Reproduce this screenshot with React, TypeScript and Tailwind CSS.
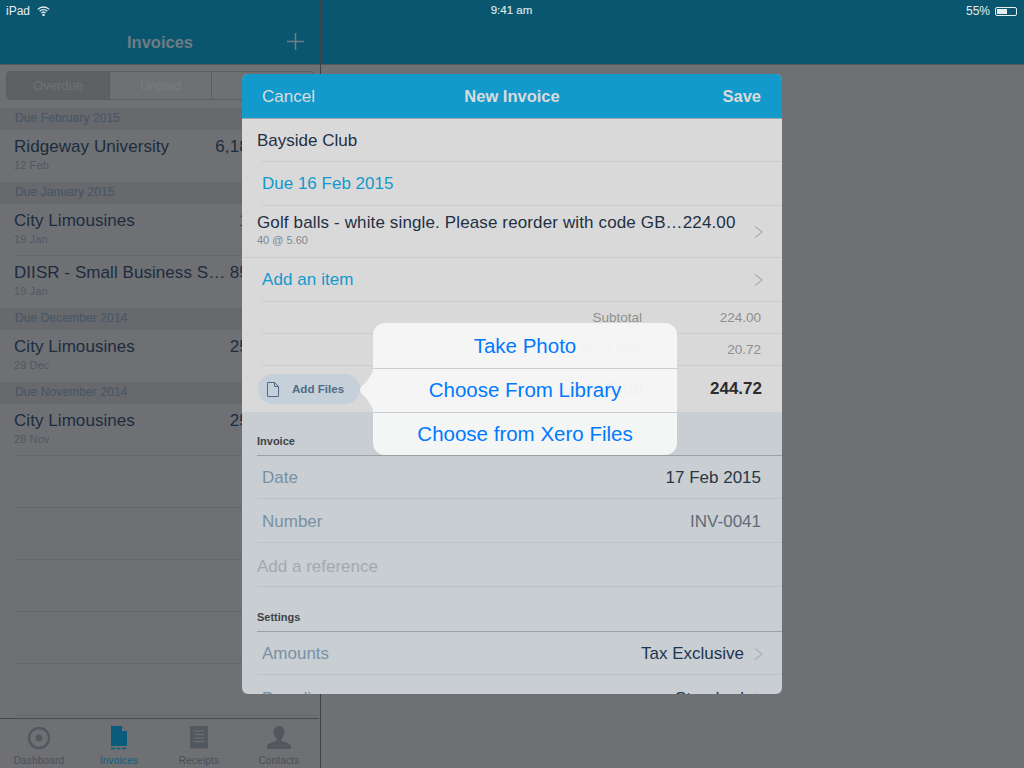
import React from "react";

const Chevron = () => (
  <svg width="9" height="12" viewBox="0 0 9 12" fill="none" className="shrink-0">
    <path d="M1 .5L8 6 1 11.500" stroke="#adb0b3" strokeWidth="1.3" />
  </svg>
);

const Section = ({ t }: { t: string }) => (
  <div className="h-[22px] pl-[15px] bg-[#67696d] text-[12px] leading-[20px] tracking-[0.1px] [-webkit-text-stroke:0.2px_#4a5766] text-[#4a5766]">{t}</div>
);

const ListRow = ({ name, date, amount, line }: { name: string; date: string; amount: string; line?: boolean }) => (
  <div className="relative h-[52px] pl-[14px] pr-[38px] pt-[7px] bg-[#6f7074]">
    <div className="flex justify-between whitespace-nowrap text-[17px] leading-[20px] tracking-[0.06px] text-[#1c2c3d]">
      <span className="w-[212px] truncate">{name}</span>
      <span>{amount}</span>
    </div>
    <div className="mt-[2px] text-[11px] leading-[13px] tracking-[0.1px] text-[#4f5862]">{date}</div>
    {line && <div className="absolute bottom-0 left-[15px] right-0 h-px bg-[#65676b]" />}
  </div>
);

const EmptyRow = () => <div className="h-[52px] ml-[15px] border-b border-[#65676b]" />;

const Tab = ({ label, active, children }: { label: string; active?: boolean; children: React.ReactNode }) => (
  <div className="flex w-[80px] flex-col items-center pt-[6px]">
    <div className="flex h-[25px] items-center justify-center">{children}</div>
    <div className={`mt-[5px] text-[10px] leading-[12px] tracking-[0.2px] ${active ? "text-[#0a5f80]" : "text-[#4a4f55]"}`}>{label}</div>
  </div>
);

const FormRow = ({ label, value, chevron, valueClass, h }: { label: string; value?: string; chevron?: boolean; valueClass?: string; h: string }) => (
  <div className={`flex items-center justify-between border-b border-[#bdc2c6] pl-[5px] ${chevron ? "pr-[19px]" : "pr-[21px]"} ${h}`}>
    <span className="text-[17px] text-[#7890a6]">{label}</span>
    <span className="flex items-center gap-[10px]">
      <span className={`text-[17px] ${valueClass ?? "text-[#1e3550]"}`}>{value}</span>
      {chevron && <Chevron />}
    </span>
  </div>
);

const TotalRow = ({ label, value }: { label: string; value: string }) => (
  <div className="ml-[20px] flex h-[32px] items-center border-b border-[#cbcbcb] pr-[21px] pt-[2px] text-[13.5px] text-[#8f8f8f]">
    <span className="w-[380px] text-right">{label}</span>
    <span className="flex-1 text-right">{value}</span>
  </div>
);

export default function App() {
  return (
    <div className="relative flex h-[768px] w-[1024px] overflow-hidden bg-[#6f7074] font-['Liberation_Sans',sans-serif]">
      {/* Left pane */}
      <div className="flex h-full w-[321px] shrink-0 flex-col border-r border-[#3f4145]">
        <div className="relative flex h-[65px] shrink-0 items-end justify-center border-b border-[#55575b] bg-[#0b566f] pb-[12px]">
          <span className="text-[16.5px] font-bold leading-[20px] text-[#6f7c84]">Invoices</span>
          <svg width="17" height="17" viewBox="0 0 17 17" className="absolute left-[287px] top-[33px]">
            <path d="M8.500 0v17M0 8.500h17" stroke="#6f7c84" strokeWidth="1.6" />
          </svg>
        </div>
        <div className="flex h-[43px] shrink-0 items-start px-[6px] pt-[6px]">
          <div className="flex h-[29px] w-[308px] overflow-hidden rounded-[4px] border border-[#5a5c60] text-[13px] leading-[27px] text-[#797b7f]">
            <div className="w-[102px] bg-[#5f6064] text-center text-[#707276]">Overdue</div>
            <div className="w-[103px] border-x border-[#5a5c60] text-center">Unpaid</div>
            <div className="flex-1 text-center">Draft</div>
          </div>
        </div>
        <div className="flex-1 overflow-hidden">
          <Section t="Due February 2015" />
          <ListRow name="Ridgeway University" date="12 Feb" amount="6,188.00" />
          <Section t="Due January 2015" />
          <ListRow name="City Limousines" date="19 Jan" amount="18.00" line />
          <ListRow name="DIISR - Small Business Services" date="19 Jan" amount="850.00" />
          <Section t="Due December 2014" />
          <ListRow name="City Limousines" date="29 Dec" amount="250.00" />
          <Section t="Due November 2014" />
          <ListRow name="City Limousines" date="28 Nov" amount="250.00" line />
          <EmptyRow />
          <EmptyRow />
          <EmptyRow />
          <EmptyRow />
          <EmptyRow />
        </div>
        <div className="flex h-[50px] shrink-0 -translate-x-px border-t border-[#47494d]">
          <Tab label="Dashboard">
            <svg width="24" height="24" viewBox="0 0 24 24">
              <circle cx="12" cy="12" r="10" fill="none" stroke="#53585e" strokeWidth="2.4" />
              <circle cx="12" cy="12" r="3.400" fill="#53585e" />
            </svg>
          </Tab>
          <Tab label="Invoices" active>
            <svg width="18" height="24" viewBox="0 0 18 24">
              <path d="M1 0h11l5 5v15H1z" fill="#0b5b7b" />
              <path d="M12 0v5h5z" fill="#6f7074" />
              <path d="M1 22.500h16" stroke="#0b5b7b" strokeWidth="1.400" strokeDasharray="4 1.500" />
            </svg>
          </Tab>
          <Tab label="Receipts">
            <svg width="18" height="24" viewBox="0 0 18 24">
              <path d="M0 0h18v23l-2-1-2 1-2-1-2 1-2-1-2 1-2-1-2 1-2-1z" fill="#53585e" />
              <path d="M4 5h10M4 8.500h10M4 12h10M4 15.500h10" stroke="#6f7074" strokeWidth="1.200" />
            </svg>
          </Tab>
          <Tab label="Contacts">
            <svg width="24" height="24" viewBox="0 0 24 24">
              <path d="M12 0c3.600 0 5.400 2.800 5.400 6 0 3-1.200 5.400-2.800 6.800v2c2.600 1.200 8.400 2.200 9.400 5.200v3H0v-3c1-3 6.800-4 9.400-5.200v-2C7.800 11.400 6.600 9 6.600 6 6.600 2.800 8.400 0 12 0z" fill="#53585e" />
            </svg>
          </Tab>
        </div>
      </div>

      {/* Right pane */}
      <div className="flex-1">
        <div className="h-[65px] border-b border-[#55575b] bg-[#0b566f]" />
      </div>

      {/* Status bar */}
      <div className="absolute inset-x-0 top-0 grid h-[22px] grid-cols-3 items-center px-[6px] text-[12px] text-[#d9e3e8]">
        <div className="flex items-center gap-[7px]">
          <span className="text-[#e6edf0]">iPad</span>
          <svg width="13" height="10" viewBox="0 0 13 10" fill="none" stroke="#e6edf0" strokeWidth="1.300">
            <path d="M.8 3.400a8 8 0 0 1 11.400 0M2.700 5.300a5.300 5.300 0 0 1 7.600 0M4.500 7.100a2.700 2.700 0 0 1 4 0" />
            <circle cx="6.500" cy="9" r=".6" />
          </svg>
        </div>
        <div className="pr-[1px] text-center text-[11.5px] [-webkit-text-stroke:0.2px_#d9e3e8]">9:41 am</div>
        <div className="flex items-center justify-end gap-[5px] pr-[1px] text-[#e6edf0]">
          <span>55%</span>
          <span className="flex h-[9px] w-[22px] items-center rounded-[2px] border border-[#e6edf0] p-[1px]">
            <span className="h-full w-[10px] bg-[#e6edf0]" />
          </span>
        </div>
      </div>

      {/* Modal */}
      <div className="absolute left-[242px] top-[74px] h-[620px] w-[540px] overflow-hidden rounded-[6px] bg-[#c9ced2]">
        <div className="grid h-[45px] grid-cols-3 items-center border-b border-[#9ea7ac] bg-[#129acd] px-[20px] text-[17px] text-[#dbdbdb]">
          <span className="pt-[1px]">Cancel</span>
          <span className="text-center text-[16.5px] font-bold">New Invoice</span>
          <span className="pr-[1px] text-right text-[16.5px] font-bold">Save</span>
        </div>
        <div className="h-[293px] bg-[#d9d9d9]">
          <div className="flex h-[42px] items-center pl-[15px] pt-[1px] text-[17px] text-[#1f3044]">Bayside Club</div>
          <div className="ml-[20px] flex h-[45px] items-center border-y border-[#cbcbcb] text-[17px] text-[#129acd]">Due 16 Feb 2015</div>
          <div className="flex h-[52px] items-center justify-between border-b border-[#cbcbcb] pl-[15px] pr-[19px]">
            <div className="pb-[4px]">
              <div className="whitespace-nowrap text-[17px] leading-[20px] tracking-[0.13px] text-[#1f3044]">Golf balls - white single. Please reorder with code GB…224.00</div>
              <div className="mt-[1px] text-[11px] leading-[13px] text-[#7b8894]">40 @ 5.60</div>
            </div>
            <Chevron />
          </div>
          <div className="ml-[20px] flex h-[44px] items-center justify-between border-b border-[#cbcbcb] pr-[19px] text-[17px] tracking-[0.08px] text-[#129acd]">
            <span>Add an item</span>
            <Chevron />
          </div>
          <TotalRow label="Subtotal" value="224.00" />
          <TotalRow label="Tax 9.25%" value="20.72" />
          <div className="relative flex h-[46px] items-center justify-end pr-[20px]">
            <div className="absolute left-[16px] top-[8px] flex h-[30px] w-[102px] items-center rounded-full bg-[#c6d0da] pl-[9px] text-[11.6px] font-bold text-[#4f6b88]">
              <svg width="12" height="15" viewBox="0 0 12 15" fill="none" stroke="#4f6b88" strokeWidth="1">
                <path d="M.5.500h7l4 4v10H.5z" />
                <path d="M7.500.500v4h4" />
              </svg>
              <span className="ml-[13px]">Add Files</span>
            </div>
            <span className="absolute right-[139px] text-[17px] font-bold text-[#8f8f8f]">Total</span>
            <span className="text-[17px] font-bold text-[#2c2c2c]">244.72</span>
          </div>
        </div>
        <div className="h-[43px] pl-[15px] pt-[23px] text-[11px] font-bold leading-[13px] text-[#3f4347]">Invoice</div>
        <div className="ml-[15px] border-t border-[#9aa0a5]">
          <FormRow label="Date" value="17 Feb 2015" valueClass="text-[#2a3644]" h="h-[43px] pt-[2px]" />
          <FormRow label="Number" value="INV-0041" valueClass="text-[#5d6c7b]" h="h-[44px] pt-[2px]" />
          <div className="flex h-[44px] items-center border-b border-[#bdc2c6] pt-[4px] text-[17px] text-[#a4a9ae]">Add a reference</div>
        </div>
        <div className="h-[44px] pl-[15px] pt-[24px] text-[11px] font-bold leading-[13px] text-[#3f4347]">Settings</div>
        <div className="ml-[15px] border-t border-[#9aa0a5]">
          <FormRow label="Amounts" value="Tax Exclusive" chevron h="h-[43px] pt-[2px]" />
          <FormRow label="Branding" value="Standard" chevron h="h-[44px] pt-[4px]" />
        </div>
      </div>

      {/* Popover */}
      <div className="absolute left-[373px] top-[323px] w-[304px] rounded-[12px] bg-[#f7f7f7]/95 text-center text-[20.5px] text-[#007aff]">
        <div className="flex h-[46px] items-center justify-center border-b border-[#c9ccd3] pt-[2px]">Take Photo</div>
        <div className="flex h-[44px] items-center justify-center border-b border-[#c9ccd3]">Choose From Library</div>
        <div className="flex h-[42px] items-center justify-center">Choose from Xero Files</div>
        <svg width="14" height="46" viewBox="0 0 14 46" className="absolute left-[-13px] top-[44px]">
          <path d="M14 0v46c-1-6-4-9-7-14C4.500 29 0 26 0 23s4.500-6 7-9c3-5 6-8 7-14z" fill="#f7f7f7" fillOpacity="0.95" />
        </svg>
      </div>
    </div>
  );
}
